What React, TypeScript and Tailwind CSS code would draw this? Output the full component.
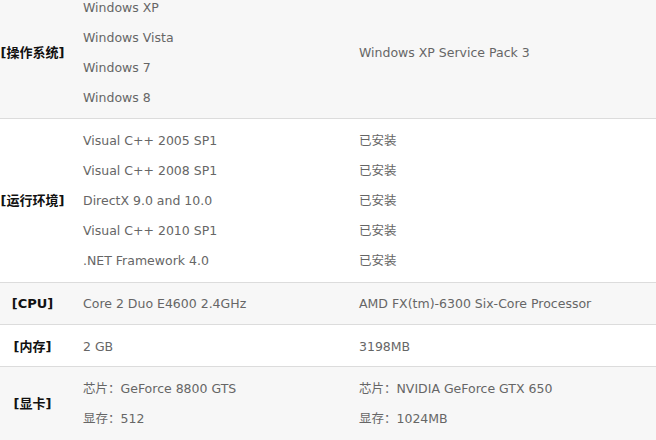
const font = { fontFamily: '"DejaVu Sans", "Noto Sans CJK SC", sans-serif' };

type Row = {
    label: string;
    min: string[];
    cur: string[];
    gray: boolean;
    pad: string;
};

const rows: Row[] = [
    {
        label: '[操作系统]',
        min: ['Windows XP', 'Windows Vista', 'Windows 7', 'Windows 8'],
        cur: ['Windows XP Service Pack 3'],
        gray: true,
        pad: 'pt-0 pb-[5px]',
    },
    {
        label: '[运行环境]',
        min: ['Visual C++ 2005 SP1', 'Visual C++ 2008 SP1', 'DirectX 9.0 and 10.0', 'Visual C++ 2010 SP1', '.NET Framework 4.0'],
        cur: ['已安装', '已安装', '已安装', '已安装', '已安装'],
        gray: false,
        pad: 'pt-[7px] pb-[6px]',
    },
    {
        label: '[CPU]',
        min: ['Core 2 Duo E4600 2.4GHz'],
        cur: ['AMD FX(tm)-6300 Six-Core Processor'],
        gray: true,
        pad: 'pt-[6px] pb-[5px]',
    },
    {label: '[内存]', min: ['2 GB'], cur: ['3198MB'], gray: false, pad: 'pt-[7px] pb-[4px]'},
    {
        label: '[显卡]',
        min: ['芯片：GeForce 8800 GTS', '显存：512'],
        cur: ['芯片：NVIDIA GeForce GTX 650', '显存：1024MB'],
        gray: true,
        pad: 'pt-[7px] pb-[7px]',
    },
];

export default function App() {
    return (
        <div className="w-[656px] h-[440px] overflow-hidden bg-white text-[12.5px] text-[#666]" style={font}>
            <div className="-mt-[7px]">
                {rows.map((row, i) => (
                    <div
                        key={i}
                        className={`grid grid-cols-[65px_294px_1fr] items-center border-b border-[#dcdcdc] ${row.pad} ${
                            row.gray ? 'bg-[#f7f7f7]' : 'bg-white'
                        }`}
                    >
                        <div className="text-center font-bold text-[13px] text-[#111]">{row.label}</div>
                        <div className="pl-[18px]">
                            {row.min.map((m, j) => (
                                <div key={j} className="leading-[30px]">{m}</div>
                            ))}
                        </div>
                        <div>
                            {row.cur.map((c, j) => (
                                <div key={j} className="leading-[30px]">{c}</div>
                            ))}
                        </div>
                    </div>
                ))}
            </div>
        </div>
    );
}
